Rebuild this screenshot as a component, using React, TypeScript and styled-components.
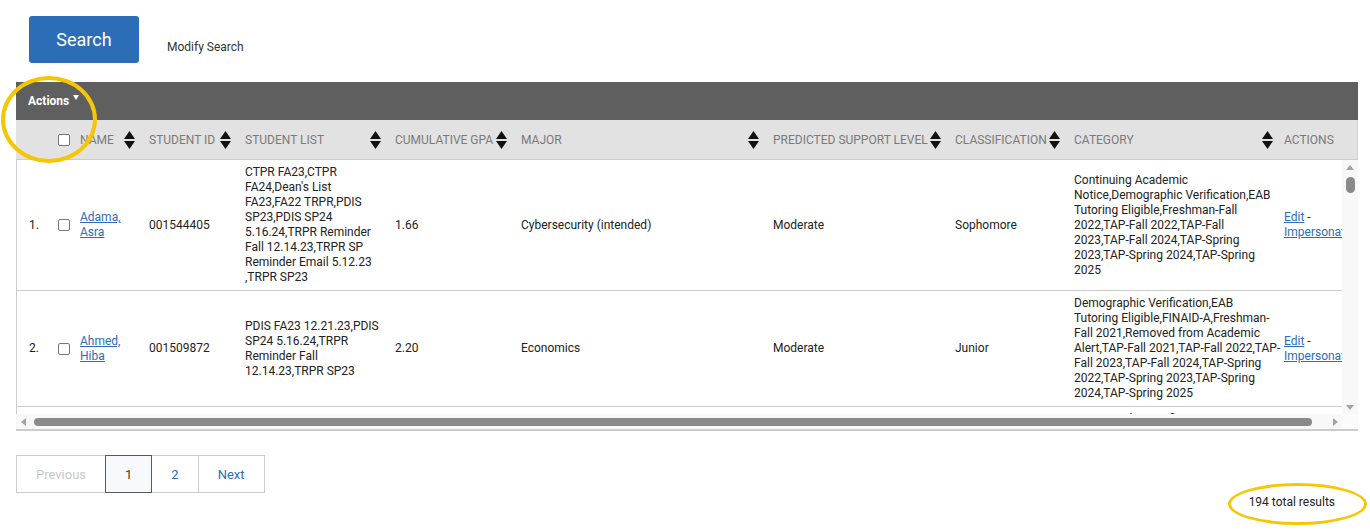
import React from "react";
import styled, { createGlobalStyle } from "styled-components";

const GlobalStyle = createGlobalStyle`
  html, body { margin: 0; padding: 0; background: #ffffff; }
  body { font-family: Roboto, "Liberation Sans", Arial, sans-serif; color: #222; }
  * { box-sizing: border-box; }
`;

const Page = styled.div`
  position: relative;
  width: 1370px;
  min-height: 531px;
  padding: 16px 0 0 16px;
`;

const TopBar = styled.div`
  display: flex;
  align-items: flex-start;
  padding-left: 13px;
`;

const SearchButton = styled.button`
  width: 110px;
  height: 47px;
  border: none;
  border-radius: 3px;
  background: #2c6db7;
  color: #fff;
  font-family: Roboto, sans-serif;
  font-size: 18px;
  cursor: pointer;
`;

const ModifyLink = styled.a`
  margin: 24px 0 0 28px;
  font-size: 12px;
  line-height: 15px;
  color: #333;
  text-decoration: none;
`;

const TableWrap = styled.div`
  width: 1342px;
  margin-top: 19px;
`;

const ActionBar = styled.div`
  height: 38px;
  background: #5f5f5f;
  display: flex;
  align-items: center;
  padding-left: 12px;
  color: #fff;
  font-size: 12px;
  font-weight: 700;
`;

const Caret = styled.svg`
  margin-left: 4px;
  align-self: center;
  transform: translateY(-4px);
`;

const HeadViewport = styled.div`
  width: 1342px;
  overflow: hidden;
  background: #e2e2e2;
  border-right: 1px solid #d2d2d2;
  border-bottom: 1px solid #cccccc;
`;

const Table = styled.table`
  table-layout: fixed;
  border-collapse: collapse;
  border-spacing: 0;
`;

const Th = styled.th`
  height: 39px;
  padding: 0;
  font-size: 12px;
  font-weight: 400;
  color: #7a7a7a;
  text-transform: uppercase;
  text-align: left;
  white-space: nowrap;
  vertical-align: middle;
`;

const HeadInner = styled.div<{ $pl?: number }>`
  display: flex;
  align-items: center;
  justify-content: space-between;
  padding: 0 9px 0 ${(p) => (p.$pl ?? 5)}px;
`;

const BodyGrid = styled.div`
  display: grid;
  grid-template-columns: 1326px 16px;
  grid-template-rows: 254px 15px;
  border-bottom: 2px solid #cccccc;
`;

const BodyViewport = styled.div`
  overflow: hidden;
  border-left: 1px solid #cccccc;
`;

const Tr = styled.tr`
  border-bottom: 1px solid #cccccc;
`;

const Td = styled.td<{ $pl?: number; $pr?: number; $nowrap?: boolean }>`
  padding: 5px ${(p) => (p.$pr ?? 5)}px 5px ${(p) => (p.$pl ?? 5)}px;
  font-size: 12px;
  line-height: 15px;
  color: #222;
  vertical-align: middle;
  overflow: hidden;
  white-space: ${(p) => (p.$nowrap ? "nowrap" : "normal")};
`;

const CheckCell = styled.td`
  padding: 0;
  vertical-align: middle;
`;

const Check = styled.input`
  appearance: none;
  display: block;
  width: 12px;
  height: 12px;
  margin: 0 0 0 3px;
  border: 1px solid #767676;
  border-radius: 2px;
  background: #fff;
`;

const Link = styled.a`
  color: #2a6ebb;
  text-decoration: underline;
`;

const Line = styled.span`
  display: block;
`;

const VBar = styled.div`
  background: #f8f8f8;
  display: flex;
  flex-direction: column;
  align-items: center;
`;

const HBar = styled.div`
  background: #f8f8f8;
  display: flex;
  align-items: center;
`;

const Corner = styled.div`
  background: #fbfbfb;
`;

const ArrowBox = styled.div<{ $horizontal?: boolean }>`
  flex: none;
  display: flex;
  align-items: center;
  justify-content: center;
  width: ${(p) => (p.$horizontal ? "14px" : "16px")};
  height: ${(p) => (p.$horizontal ? "15px" : "14px")};
`;

const Spacer = styled.div`
  flex: 1;
`;

const VThumb = styled.div`
  width: 9px;
  height: 16px;
  margin-top: 3px;
  border-radius: 5px;
  background: #8a8a8a;
`;

const HThumb = styled.div`
  flex: 1;
  height: 8px;
  margin: 0 16px 0 4px;
  border-radius: 4px;
  background: #8a8a8a;
`;

const Pagination = styled.div`
  display: flex;
  margin-top: 24px;
`;

const PageBtn = styled.a<{ $active?: boolean; $disabled?: boolean }>`
  display: flex;
  align-items: center;
  justify-content: center;
  height: 38px;
  padding: 0 19px;
  font-size: 13px;
  line-height: 15px;
  text-decoration: none;
  border: 1px solid ${(p) => (p.$active ? "#5a5a5a" : "#cccccc")};
  margin-left: -1px;
  background: ${(p) => (p.$active ? "#f7f9fb" : "#fff")};
  color: ${(p) => (p.$disabled ? "#c8c8c8" : p.$active ? "#4a3a30" : "#2a6ebb")};
  position: relative;
  z-index: ${(p) => (p.$active ? 1 : 0)};
  &:first-child { margin-left: 0; }
`;

const Total = styled.div`
  width: 1342px;
  margin-top: 2px;
  padding-right: 23px;
  text-align: right;
  font-size: 12px;
  line-height: 15px;
  color: #222;
`;

const Annotation = styled.div<{ $l: number; $t: number; $w: number; $h: number; $b: number }>`
  position: absolute;
  left: ${(p) => p.$l}px;
  top: ${(p) => p.$t}px;
  width: ${(p) => p.$w}px;
  height: ${(p) => p.$h}px;
  border: ${(p) => p.$b}px solid #f8c600;
  border-radius: 50%;
  pointer-events: none;
`;

const COLS = [39, 20, 69, 96, 150, 126, 252, 182, 119, 213, 90];

const SortIcon = () => (
  <svg width="11" height="18" viewBox="0 0 11 18">
    <polygon points="0,8 5.5,0 11,8" fill="#111" />
    <polygon points="0,10 11,10 5.5,18" fill="#111" />
  </svg>
);

const Tri = ({ dir }: { dir: "up" | "down" | "left" | "right" }) => {
  const pts =
    dir === "up"
      ? "0,5 4,0 8,5"
      : dir === "down"
      ? "0,0 8,0 4,5"
      : dir === "left"
      ? "5,0 5,8 0,4"
      : "0,0 0,8 5,4";
  const w = dir === "up" || dir === "down" ? 8 : 5;
  const h = dir === "up" || dir === "down" ? 5 : 8;
  return (
    <svg width={w} height={h} viewBox={`0 0 ${w} ${h}`}>
      <polygon points={pts} fill="#a3a3a3" />
    </svg>
  );
};

const headers = [
  "Name",
  "Student ID",
  "Student List",
  "Cumulative GPA",
  "Major",
  "Predicted Support Level",
  "Classification",
  "Category",
];

type Row = {
  name: string;
  id: string;
  list: string;
  gpa: string;
  major: string;
  pred: string;
  cls: string;
  cat: string[];
};

const rows: Row[] = [
  {
    name: "Adama, Asra",
    id: "001544405",
    list:
      "CTPR FA23,CTPR FA24,Dean's List FA23,FA22 TRPR,PDIS SP23,PDIS SP24 5.16.24,TRPR Reminder Fall 12.14.23,TRPR SP Reminder Email 5.12.23 ,TRPR SP23",
    gpa: "1.66",
    major: "Cybersecurity (intended)",
    pred: "Moderate",
    cls: "Sophomore",
    cat: [
      "Continuing Academic",
      "Notice,Demographic Verification,EAB",
      "Tutoring Eligible,Freshman-Fall",
      "2022,TAP-Fall 2022,TAP-Fall",
      "2023,TAP-Fall 2024,TAP-Spring",
      "2023,TAP-Spring 2024,TAP-Spring",
      "2025",
    ],
  },
  {
    name: "Ahmed, Hiba",
    id: "001509872",
    list: "PDIS FA23 12.21.23,PDIS SP24 5.16.24,TRPR Reminder Fall 12.14.23,TRPR SP23",
    gpa: "2.20",
    major: "Economics",
    pred: "Moderate",
    cls: "Junior",
    cat: [
      "Demographic Verification,EAB",
      "Tutoring Eligible,FINAID-A,Freshman-",
      "Fall 2021,Removed from Academic",
      "Alert,TAP-Fall 2021,TAP-Fall 2022,TAP-",
      "Fall 2023,TAP-Fall 2024,TAP-Spring",
      "2022,TAP-Spring 2023,TAP-Spring",
      "2024,TAP-Spring 2025",
    ],
  },
  {
    name: "Ahmed, Sara",
    id: "001523318",
    list: "PDIS SP24 5.16.24,TRPR SP23",
    gpa: "3.12",
    major: "Biology",
    pred: "Low",
    cls: "Senior",
    cat: [
      "Demographic Verification,EAB",
      "Tutoring Eligible,Freshman-Fall",
      "2020,TAP-Fall 2020,TAP-Fall",
      "2021,TAP-Fall 2022,TAP-Fall",
      "2023,TAP-Spring 2021,TAP-Spring",
      "2022,TAP-Spring 2023,TAP-Spring",
      "2024,TAP-Spring 2025",
      "2025",
    ],
  },
];

const Cols = ({ first }: { first: number }) => (
  <colgroup>
    {COLS.map((w, i) => (
      <col key={i} style={{ width: i === 0 ? first : w }} />
    ))}
  </colgroup>
);

const tableWidth = COLS.reduce((a, b) => a + b, 0);

export default function App() {
  return (
    <>
      <GlobalStyle />
      <Page>
        <TopBar>
          <SearchButton>Search</SearchButton>
          <ModifyLink>Modify Search</ModifyLink>
        </TopBar>

        <TableWrap>
          <ActionBar>
            Actions
            <Caret width="6" height="5" viewBox="0 0 6 5">
              <polygon points="0,0 6,0 3,5" fill="#fff" />
            </Caret>
          </ActionBar>

          <HeadViewport>
            <Table style={{ width: tableWidth }}>
              <Cols first={39} />
              <thead>
                <tr>
                  <Th />
                  <Th>
                    <Check type="checkbox" />
                  </Th>
                  {headers.map((h) => (
                    <Th key={h}>
                      <HeadInner>
                        <span>{h}</span>
                        <SortIcon />
                      </HeadInner>
                    </Th>
                  ))}
                  <Th>
                    <HeadInner $pl={2}>
                      <span>Actions</span>
                    </HeadInner>
                  </Th>
                </tr>
              </thead>
            </Table>
          </HeadViewport>

          <BodyGrid>
            <BodyViewport>
              <Table style={{ width: tableWidth - 1 }}>
                <Cols first={38} />
                <tbody>
                  {rows.map((r, i) => (
                    <Tr key={r.id}>
                      <Td $pl={12}>{i + 1}.</Td>
                      <CheckCell>
                        <Check type="checkbox" />
                      </CheckCell>
                      <Td>
                        <Link>{r.name}</Link>
                      </Td>
                      <Td>{r.id}</Td>
                      <Td>{r.list}</Td>
                      <Td>{r.gpa}</Td>
                      <Td>{r.major}</Td>
                      <Td>{r.pred}</Td>
                      <Td>{r.cls}</Td>
                      <Td $pr={0} $nowrap>
                        {r.cat.map((l, j) => (
                          <Line key={j}>{l}</Line>
                        ))}
                      </Td>
                      <Td $pl={2}>
                        <Link>Edit</Link> - <Link>Impersonate</Link>
                      </Td>
                    </Tr>
                  ))}
                </tbody>
              </Table>
            </BodyViewport>
            <VBar>
              <ArrowBox>
                <Tri dir="up" />
              </ArrowBox>
              <VThumb />
              <Spacer />
              <ArrowBox>
                <Tri dir="down" />
              </ArrowBox>
            </VBar>
            <HBar>
              <ArrowBox $horizontal>
                <Tri dir="left" />
              </ArrowBox>
              <HThumb />
              <ArrowBox $horizontal>
                <Tri dir="right" />
              </ArrowBox>
            </HBar>
            <Corner />
          </BodyGrid>
        </TableWrap>

        <Pagination>
          <PageBtn $disabled>Previous</PageBtn>
          <PageBtn $active>1</PageBtn>
          <PageBtn>2</PageBtn>
          <PageBtn>Next</PageBtn>
        </Pagination>

        <Total>194 total results</Total>

        <Annotation $l={1} $t={76} $w={96} $h={87} $b={4} />
        <Annotation $l={1228} $t={483} $w={139} $h={42} $b={3} />
      </Page>
    </>
  );
}
